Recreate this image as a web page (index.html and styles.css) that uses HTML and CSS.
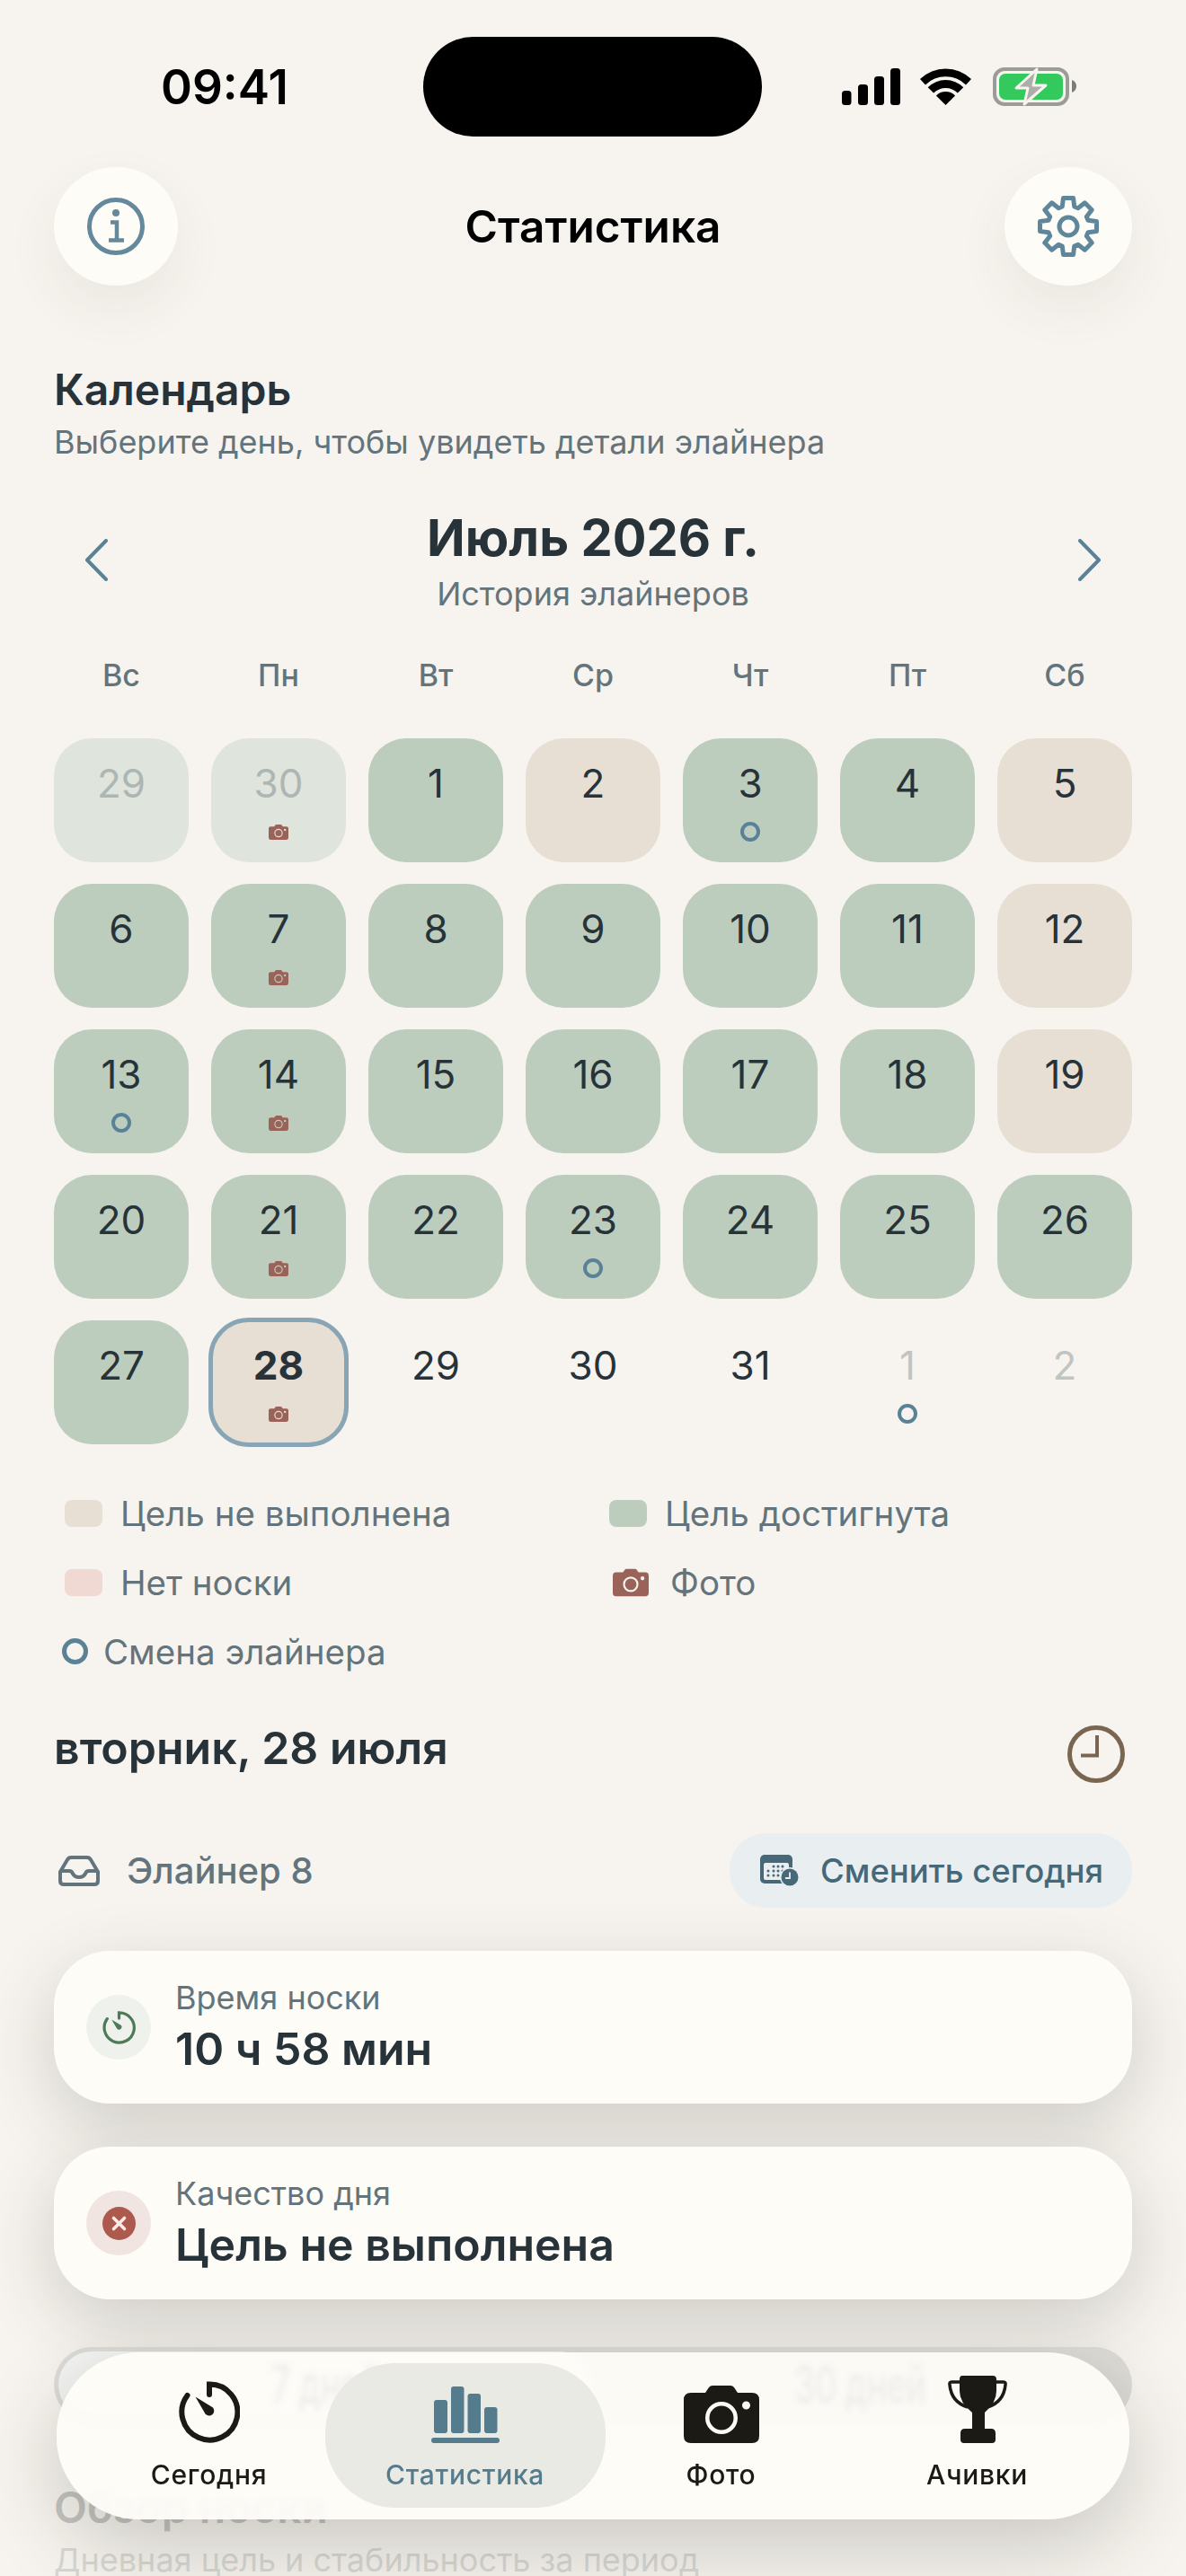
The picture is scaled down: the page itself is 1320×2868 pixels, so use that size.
FILE: index.html
```html
<!DOCTYPE html>
<html lang="ru">
<head>
    <meta charset="UTF-8">
    <meta name="viewport" content="width=device-width, initial-scale=1.0">
    <title>Статистика</title>
    <link rel="stylesheet" href="styles.css">
</head>
<body>
    <svg class="sprites" width="0" height="0">
        <symbol id="cam" viewBox="0 0 84 64">
            <path fill="currentColor" fill-rule="evenodd" d="M8 8h16l4-6q1.5-2 4-2h20q2.500 0 4 2l4 6h16q8 0 8 8v40q0 8-8 8H8q-8 0-8-8V16q0-8 8-8zM60 36a18 18 0 1 0-36 0a18 18 0 1 0 36 0zM55.500 36a13.500 13.500 0 1 0-27 0a13.500 13.500 0 1 0 27 0zM74 22a4.500 4.500 0 1 0-9 0a4.500 4.500 0 1 0 9 0z"/>
        </symbol>
        <symbol id="watch" viewBox="0 0 68 69">
            <path fill="none" stroke="currentColor" stroke-width="6" stroke-linecap="round" d="M34 15V3.500A31 31 0 1 1 9.500 16"/>
            <path fill="currentColor" d="M18.500 17.500L38 29.500a5.500 5.500 0 1 1-8.500 7z"/>
        </symbol>
    </svg>

    <div class="screen">
        <div class="status">
            <span class="status__time">09:41</span>
            <div class="status__island"></div>
            <div class="status__icons">
                <svg width="65" height="41" viewBox="0 0 65 41">
                    <rect x="0" y="25" width="10.500" height="16" rx="3.500"/>
                    <rect x="18" y="18" width="11" height="23" rx="3.500"/>
                    <rect x="36" y="9" width="11" height="32" rx="3.500"/>
                    <rect x="54" y="0" width="11" height="41" rx="3.500"/>
                </svg>
                <svg width="57" height="41" viewBox="0 0 57 41">
                    <path d="M0 12A41 41 0 0 1 57 12L51 18.400A32 32 0 0 0 6 18.400z"/>
                    <path d="M8.700 21.200A28 28 0 0 1 48.300 21.200L41.900 27.600A19 19 0 0 0 15.100 27.600z"/>
                    <path d="M17.900 30.400A15 15 0 0 1 39.100 30.400L28.500 41z"/>
                </svg>
                <svg class="status__battery" width="93" height="43" viewBox="0 0 93 43">
                    <rect x="2" y="2" width="81" height="39" rx="11" fill="none" stroke="#9b9b97" stroke-width="4"/>
                    <rect x="7" y="7" width="71" height="29" rx="7" fill="#34c95c"/>
                    <path d="M88 14q5 2 5 7t-5 7z" fill="#7c7c79"/>
                    <path d="M49 2L26 23H39L35 41L59 20H45z" fill="#adadaa" stroke="#f7f4ef" stroke-width="3" stroke-linejoin="round"/>
                </svg>
            </div>
        </div>

        <header class="topbar">
            <button class="round-btn round-btn--info">
                <svg width="64" height="66" viewBox="0 0 64 66" fill="none" stroke="#64899c" stroke-width="5">
                    <circle cx="32" cy="33" r="29.500"/>
                    <circle cx="32" cy="18" r="4" fill="#64899c" stroke="none"/>
                    <path d="M26 28.500H33V48M24 48.500H41" stroke-width="4.500"/>
                </svg>
            </button>
            <h1 class="topbar__title">Статистика</h1>
            <button class="round-btn">
                <svg width="70" height="70" viewBox="-35 -35 70 70" fill="none" stroke="#5f879b" stroke-width="5" stroke-linejoin="round">
                    <path d="M-5.560-31.510L5.560-31.510L6.720-21.990L10.800-20.310L18.350-26.210L26.210-18.350L20.310-10.800L21.990-6.720L31.510-5.560L31.510 5.560L21.990 6.720L20.310 10.800L26.210 18.350L18.350 26.210L10.800 20.310L6.720 21.990L5.560 31.510L-5.560 31.510L-6.720 21.990L-10.800 20.310L-18.350 26.210L-26.210 18.350L-20.310 10.800L-21.990 6.720L-31.510 5.560L-31.510-5.560L-21.990-6.720L-20.310-10.800L-26.210-18.350L-18.350-26.210L-10.800-20.310L-6.720-21.990z"/>
                    <circle r="10"/>
                </svg>
            </button>
        </header>

        <section class="calendar">
            <h2 class="section-title">Календарь</h2>
            <p class="section-sub">Выберите день, чтобы увидеть детали элайнера</p>

            <div class="month">
                <svg class="month__arrow" width="26" height="47" viewBox="0 0 26 47"><path d="M24 2L3 23.500L24 45"/></svg>
                <div class="month__label">
                    <div class="month__name">Июль 2026 г.</div>
                    <div class="month__hint">История элайнеров</div>
                </div>
                <svg class="month__arrow" width="26" height="47" viewBox="0 0 26 47"><path d="M2 2L23 23.500L2 45"/></svg>
            </div>

            <div class="weekdays">
                <span>Вс</span><span>Пн</span><span>Вт</span><span>Ср</span><span>Чт</span><span>Пт</span><span>Сб</span>
            </div>

            <div class="days">
                <div class="day day--past"><span class="day__num">29</span></div>
                <div class="day day--past"><span class="day__num">30</span><svg class="day__cam"><use href="#cam"/></svg></div>
                <div class="day day--ok"><span class="day__num">1</span></div>
                <div class="day day--miss"><span class="day__num">2</span></div>
                <div class="day day--ok"><span class="day__num">3</span><i class="ring"></i></div>
                <div class="day day--ok"><span class="day__num">4</span></div>
                <div class="day day--miss"><span class="day__num">5</span></div>

                <div class="day day--ok"><span class="day__num">6</span></div>
                <div class="day day--ok"><span class="day__num">7</span><svg class="day__cam"><use href="#cam"/></svg></div>
                <div class="day day--ok"><span class="day__num">8</span></div>
                <div class="day day--ok"><span class="day__num">9</span></div>
                <div class="day day--ok"><span class="day__num">10</span></div>
                <div class="day day--ok"><span class="day__num">11</span></div>
                <div class="day day--miss"><span class="day__num">12</span></div>

                <div class="day day--ok"><span class="day__num">13</span><i class="ring"></i></div>
                <div class="day day--ok"><span class="day__num">14</span><svg class="day__cam"><use href="#cam"/></svg></div>
                <div class="day day--ok"><span class="day__num">15</span></div>
                <div class="day day--ok"><span class="day__num">16</span></div>
                <div class="day day--ok"><span class="day__num">17</span></div>
                <div class="day day--ok"><span class="day__num">18</span></div>
                <div class="day day--miss"><span class="day__num">19</span></div>

                <div class="day day--ok"><span class="day__num">20</span></div>
                <div class="day day--ok"><span class="day__num">21</span><svg class="day__cam"><use href="#cam"/></svg></div>
                <div class="day day--ok"><span class="day__num">22</span></div>
                <div class="day day--ok"><span class="day__num">23</span><i class="ring"></i></div>
                <div class="day day--ok"><span class="day__num">24</span></div>
                <div class="day day--ok"><span class="day__num">25</span></div>
                <div class="day day--ok"><span class="day__num">26</span></div>

                <div class="day day--ok"><span class="day__num">27</span></div>
                <div class="day day--miss day--selected"><span class="day__num">28</span><svg class="day__cam"><use href="#cam"/></svg></div>
                <div class="day"><span class="day__num">29</span></div>
                <div class="day"><span class="day__num">30</span></div>
                <div class="day"><span class="day__num">31</span></div>
                <div class="day day--next"><span class="day__num">1</span><i class="ring"></i></div>
                <div class="day day--next"><span class="day__num">2</span></div>
            </div>

            <div class="legend">
                <div class="legend__item"><i class="swatch swatch--miss"></i>Цель не выполнена</div>
                <div class="legend__item"><i class="swatch swatch--ok"></i>Цель достигнута</div>
                <div class="legend__item"><i class="swatch swatch--none"></i>Нет носки</div>
                <div class="legend__item legend__item--photo"><svg class="legend__cam"><use href="#cam"/></svg>Фото</div>
                <div class="legend__item legend__item--ring"><i class="ring ring--big"></i>Смена элайнера</div>
            </div>
        </section>

        <section class="detail">
            <div class="detail__date">
                <h2 class="detail__title">вторник, 28 июля</h2>
                <svg class="detail__clock" width="64" height="66" viewBox="0 0 64 66" fill="none" stroke="#7a6650" stroke-width="5">
                    <circle cx="32" cy="33" r="29.500"/>
                    <path d="M33 12V34.500H15" stroke-width="4"/>
                </svg>
            </div>

            <div class="aligner">
                <div class="aligner__name">
                    <svg width="46" height="34" viewBox="0 0 46 34" fill="none" stroke="#64747c" stroke-width="4" stroke-linejoin="round">
                        <path d="M2 18L10 4.500Q11.500 2 14 2H32Q34.500 2 36 4.500L44 18V28Q44 32 40 32H6Q2 32 2 28z"/>
                        <path d="M2 17H12Q15 17 16 20Q18 24 23 24Q28 24 30 20Q31 17 34 17H44"/>
                    </svg>
                    Элайнер 8
                </div>
                <button class="aligner__change">
                    <svg width="44" height="36" viewBox="0 0 44 36">
                        <rect width="36" height="32" rx="5" fill="#466878"/>
                        <rect x="4" y="9" width="28" height="19" rx="2" fill="#e9eff0"/>
                        <g fill="#466878">
                            <circle cx="15" cy="13" r="1.500"/><circle cx="20" cy="13" r="1.500"/><circle cx="25" cy="13" r="1.500"/>
                            <circle cx="9" cy="18" r="1.500"/><circle cx="15" cy="18" r="1.500"/><circle cx="20" cy="18" r="1.500"/><circle cx="25" cy="18" r="1.500"/>
                            <circle cx="9" cy="23" r="1.500"/><circle cx="15" cy="23" r="1.500"/><circle cx="20" cy="23" r="1.500"/>
                        </g>
                        <circle cx="33" cy="25" r="11" fill="#e9eff0"/>
                        <circle cx="33" cy="25" r="9.500" fill="#466878"/>
                        <path d="M33 19.500V26H28" fill="none" stroke="#e9eff0" stroke-width="1.800"/>
                    </svg>
                    Сменить сегодня
                </button>
            </div>

            <div class="stat">
                <div class="stat__icon stat__icon--time"><svg class="stat__watch"><use href="#watch"/></svg></div>
                <div class="stat__text">
                    <div class="stat__label">Время носки</div>
                    <div class="stat__value">10 ч 58 мин</div>
                </div>
            </div>
            <div class="stat">
                <div class="stat__icon stat__icon--fail">
                    <svg width="37" height="37" viewBox="0 0 37 37">
                        <circle cx="18.500" cy="18.500" r="18.500" fill="#ac5a4d"/>
                        <path d="M12.500 12.500L24.500 24.500M24.500 12.500L12.500 24.500" stroke="#f7ece7" stroke-width="3.600" stroke-linecap="round"/>
                    </svg>
                </div>
                <div class="stat__text">
                    <div class="stat__label">Качество дня</div>
                    <div class="stat__value">Цель не выполнена</div>
                </div>
            </div>

            <div class="segments">
                <div class="segments__item segments__item--on"><span>7 дней</span></div>
                <div class="segments__item"><span>30 дней</span></div>
            </div>

            <h2 class="section-title section-title--faded">Обзор носки</h2>
            <p class="section-sub section-sub--faded">Дневная цель и стабильность за период</p>
        </section>

        <nav class="tabbar">
            <a class="tab">
                <svg class="tab__icon" width="68" height="69"><use href="#watch"/></svg>
                <span class="tab__label">Сегодня</span>
            </a>
            <a class="tab tab--active">
                <svg class="tab__icon" width="76" height="63" viewBox="0 0 76 63" fill="currentColor">
                    <rect x="3" y="15" width="15" height="37" rx="3"/>
                    <rect x="22" y="0" width="14.500" height="52" rx="3"/>
                    <rect x="40.500" y="8" width="14.500" height="44" rx="3"/>
                    <rect x="59" y="23" width="14.500" height="29" rx="3"/>
                    <rect x="0" y="57" width="76" height="6" rx="3"/>
                </svg>
                <span class="tab__label">Статистика</span>
            </a>
            <a class="tab">
                <svg class="tab__icon" width="84" height="64"><use href="#cam"/></svg>
                <span class="tab__label">Фото</span>
            </a>
            <a class="tab">
                <svg class="tab__icon" width="66" height="75" viewBox="0 0 66 75">
                    <path fill="currentColor" d="M16 0H50q4 0 4 4V17Q54 30 41 41V59H48Q53 59 53 64V71Q53 75 49 75H18Q14 75 14 71V64Q14 59 19 59H27V41Q13 30 13 17V4Q13 0 16 0z"/>
                    <path fill="none" stroke="currentColor" stroke-width="3.500" d="M14 7H4Q1.500 7 2 10C3 21 9 31 22 35M52 7H62Q64.500 7 64 10C63 21 57 31 44 35"/>
                </svg>
                <span class="tab__label">Ачивки</span>
            </a>
        </nav>
    </div>
</body>
</html>
```

FILE: styles.css
```css
* {
    box-sizing: border-box;
}
body {
    margin: 0;
    background: #f7f4ef;
    font-family: Inter, "Noto Sans", sans-serif;
    color: #273339;
}
.sprites {
    position: absolute;
}
.screen {
    position: relative;
    width: 1320px;
    height: 2868px;
    overflow: hidden;
}
h1, h2, p {
    margin: 0;
}

/* status bar */
.status {
    display: flex;
    align-items: center;
    height: 111px;
    margin-top: 41px;
    padding-left: 179px;
}
.status__time {
    width: 292px;
    font-size: 53px;
    font-weight: 600;
    color: #000;
}
.status__island {
    width: 377px;
    height: 111px;
    border-radius: 56px;
    background: #000;
}
.status__icons {
    display: flex;
    align-items: center;
    gap: 22px;
    margin-left: 89px;
}
.status__battery {
    margin-left: 2px;
}

/* top bar */
.topbar {
    display: flex;
    align-items: center;
    justify-content: space-between;
    margin-top: 34px;
    padding: 0 60px;
}
.round-btn {
    display: flex;
    align-items: center;
    justify-content: center;
    width: 142px;
    height: 132px;
    padding: 0;
    border: 0;
    border-radius: 50%;
    background: #fefcf7;
    box-shadow: 0 24px 60px rgba(70, 60, 40, 0.07);
}
.round-btn--info {
    width: 138px;
}
.topbar__title {
    flex: 1;
    padding-left: 4px;
    font-size: 49.5px;
    font-weight: 600;
    text-align: center;
    color: #000;
}

/* calendar */
.calendar {
    padding: 0 60px;
}
.section-title {
    margin-top: 87px;
    font-size: 48px;
    font-weight: 600;
    line-height: 58px;
}
.section-sub {
    margin-top: 8px;
    font-size: 36px;
    line-height: 42px;
    color: #64747c;
}
.month {
    display: flex;
    align-items: center;
    justify-content: space-between;
    margin-top: 50px;
    padding: 0 34px;
}
.month__arrow {
    fill: none;
    stroke: #5a8296;
    stroke-width: 4;
    stroke-linecap: round;
    stroke-linejoin: round;
}
.month__label {
    text-align: center;
}
.month__name {
    font-size: 56px;
    font-weight: 700;
    line-height: 72px;
}
.month__hint {
    margin-top: 4px;
    font-size: 36px;
    line-height: 44px;
    color: #64747c;
}
.weekdays {
    display: grid;
    grid-template-columns: repeat(7, 150px);
    column-gap: 25px;
    margin-top: 48px;
    font-size: 34px;
    font-weight: 500;
    line-height: 42px;
    text-align: center;
    color: #64747c;
}
.days {
    display: grid;
    grid-template-columns: repeat(7, 150px);
    grid-auto-rows: 138px;
    gap: 24px 25px;
    margin-top: 49px;
}
.day {
    display: flex;
    flex-direction: column;
    align-items: center;
    padding-top: 26px;
    border-radius: 42px;
}
.day__num {
    font-size: 44px;
    line-height: 48px;
}
.day--ok {
    background: #bccdbe;
}
.day--miss {
    background: #e8dfd4;
}
.day--past {
    background: #dfe4dc;
}
.day--past .day__num {
    color: #aeb6b4;
}
.day--next .day__num {
    color: #c0c4c3;
}
.day--selected {
    outline: 5px solid #88a5b5;
    outline-offset: -2px;
}
.day--selected .day__num {
    font-weight: 700;
}
.day__cam {
    width: 22px;
    height: 17px;
    margin-top: 22px;
    color: #9a6359;
}
.ring {
    display: block;
    width: 22px;
    height: 22px;
    margin-top: 19px;
    border: 4px solid #5a8296;
    border-radius: 50%;
}
.ring--big {
    width: 29px;
    height: 29px;
    margin: 0 0 0 -3px;
    border-width: 5px;
}

/* legend */
.legend {
    display: grid;
    grid-template-columns: 606px 1fr;
    grid-auto-rows: 77px;
    margin-top: 38px;
    padding-left: 12px;
    font-size: 38.5px;
    color: #64747c;
}
.legend__item {
    display: flex;
    align-items: center;
    gap: 20px;
}
.legend__item--ring {
    gap: 17px;
}
.legend__item--photo {
    gap: 24px;
}
.swatch {
    width: 42px;
    height: 30px;
    border-radius: 8px;
}
.swatch--miss {
    background: #e8dfd4;
}
.swatch--ok {
    background: #bccdbe;
}
.swatch--none {
    background: #f0d8d3;
}
.legend__cam {
    width: 40px;
    height: 32px;
    margin-left: 4px;
    color: #9a6359;
}

/* selected day */
.detail {
    padding: 0 60px;
}
.detail__date {
    display: flex;
    align-items: flex-start;
    justify-content: space-between;
    margin-top: 43px;
}
.detail__title {
    margin-top: -4px;
    font-size: 50px;
    font-weight: 600;
    line-height: 60px;
}
.detail__clock {
    margin-right: 8px;
}
.aligner {
    display: flex;
    align-items: center;
    justify-content: space-between;
    margin-top: 55px;
}
.aligner__name {
    display: flex;
    align-items: center;
    gap: 30px;
    padding-left: 5px;
    font-size: 40px;
    font-weight: 500;
    color: #64747c;
}
.aligner__change {
    display: flex;
    align-items: center;
    gap: 23px;
    width: 448px;
    height: 83px;
    padding: 0 0 0 34px;
    border: 0;
    border-radius: 40px;
    background: #e9eff0;
    font: 500 36.5px Inter, "Noto Sans", sans-serif;
    color: #466878;
}

/* stat cards */
.stat {
    display: flex;
    align-items: center;
    gap: 27px;
    height: 170px;
    margin-top: 48px;
    padding-left: 36px;
    border-radius: 62px;
    background: #fefcf7;
    box-shadow: 0 24px 80px rgba(50, 50, 40, 0.2);
}
.stat__icon {
    display: flex;
    align-items: center;
    justify-content: center;
    width: 72px;
    height: 72px;
    border-radius: 50%;
}
.stat__icon--time {
    background: #eef1ec;
}
.stat__icon--fail {
    background: #f1e5e1;
}
.stat__watch {
    width: 37px;
    height: 37px;
    color: #4f7a58;
}
.stat__label {
    font-size: 36px;
    line-height: 42px;
    color: #64747c;
}
.stat__value {
    margin-top: 6px;
    font-size: 50px;
    font-weight: 600;
    line-height: 60px;
}

/* period switch, sits under the tab bar */
.segments {
    display: flex;
    height: 84px;
    margin-top: 53px;
    padding: 5px;
    border-radius: 42px;
    background: #dbdad5;
}
.segments__item {
    flex: 1;
    font-size: 37px;
    font-weight: 500;
    line-height: 74px;
    text-align: center;
}
.segments__item span {
    display: inline-block;
    transform: scaleY(1.6);
}
.segments__item--on {
    border-radius: 37px;
    background: #f3f3f2;
}
.section-title--faded {
    margin-top: 66px;
    color: #c5c5c0;
}
.section-sub--faded {
    margin-top: 8px;
    color: #d8d8d3;
}

/* tab bar */
.tabbar {
    position: absolute;
    left: 63px;
    top: 2619px;
    display: flex;
    width: 1194px;
    height: 186px;
    padding: 0 27px;
    border-radius: 92px;
    background: rgba(254, 252, 247, 0.93);
    backdrop-filter: blur(3px);
    box-shadow: 0 30px 90px rgba(40, 40, 30, 0.22);
}
.tab {
    position: relative;
    display: flex;
    flex: 1;
    flex-direction: column;
    align-items: center;
    justify-content: flex-end;
    padding-bottom: 33px;
    color: #1b1a15;
}
.tab--active {
    color: #557c8d;
}
.tab--active::before {
    content: "";
    position: absolute;
    left: -13px;
    right: -14px;
    top: 12px;
    bottom: 13px;
    border-radius: 78px;
    background: #eaeae5;
}
.tab__icon {
    position: relative;
    margin-bottom: 18px;
}
.tab__label {
    position: relative;
    font-size: 30px;
    font-weight: 500;
    line-height: 34px;
    letter-spacing: 0.7px;
}
```
